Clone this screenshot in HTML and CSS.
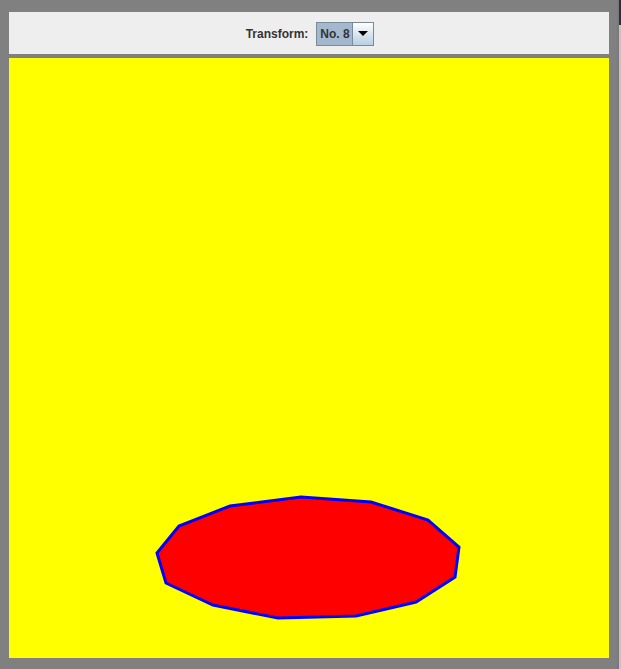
FILE: index.html
```html
<!DOCTYPE html>
<html>
<head>
<meta charset="utf-8">
<link rel="stylesheet" href="styles.css">
</head>
<body>
<div class="screen">
  <div class="window">
    <div class="toolbar">
      <span class="label">Transform:</span>
      <div class="combo">
        <span class="combo-value">No. 8</span>
        <span class="combo-button"><span class="arrow"></span></span>
      </div>
    </div>
    <div class="divider"></div>
    <div class="canvas">
      <svg class="shape" width="600" height="600" viewBox="0 0 600 600">
        <polygon points="148,495 170,468 221,448 292,439 362,444 419,462 450,489 446,519 407,544 347,558 269,560 204,547 157,525" fill="#ff0000" stroke="#0000ff" stroke-width="3" stroke-linejoin="miter"/>
      </svg>
    </div>
  </div>
  <div class="edge"><div class="edge-top"></div></div>
</div>
<div class="bottom"><div class="bottom-bar"></div></div>
</body>
</html>
```
FILE: styles.css
```css
html, body {
  margin: 0;
  padding: 0;
}
body {
  width: 621px;
  height: 669px;
  overflow: hidden;
  background: #808080;
  font-family: "Liberation Sans", Arial, sans-serif;
}
.screen {
  display: flex;
}
.window {
  width: 617px;
  height: 668px;
  box-sizing: border-box;
  padding: 12px 8px 10px 9px;
  background: #808080;
  display: flex;
  flex-direction: column;
}
.toolbar {
  height: 42px;
  background: #eeeeee;
  display: flex;
  align-items: center;
  justify-content: center;
  gap: 8px;
  padding-top: 1px;
  padding-left: 2px;
  box-sizing: border-box;
}
.label {
  font-weight: bold;
  font-size: 12px;
  color: #333333;
}
.combo {
  display: flex;
  height: 24px;
  width: 58px;
  box-sizing: border-box;
  border: 1px solid #7a8a99;
  background: #eeeeee;
}
.combo-value {
  flex: 1;
  display: flex;
  align-items: center;
  padding-left: 3px;
  background: #a3b8cc;
  font-weight: bold;
  font-size: 12px;
  color: #333333;
}
.combo-button {
  width: 20px;
  border-left: 1px solid #7a8a99;
  background: linear-gradient(#ffffff, #d7e3ee 55%, #b8cfe5);
  display: flex;
  align-items: center;
  justify-content: center;
}
.arrow {
  width: 0;
  height: 0;
  border-left: 5px solid transparent;
  border-right: 5px solid transparent;
  border-top: 5px solid #000000;
}
.divider {
  height: 4px;
  background: #808080;
}
.canvas {
  height: 600px;
  background: #ffff00;
}
.shape {
  display: block;
}
.edge {
  width: 4px;
  height: 669px;
  display: flex;
  background: linear-gradient(to right, #7a7a7a 0 2px, #c4c4c4 2px 4px);
}
.edge-top {
  width: 2px;
  height: 25px;
  margin-left: 2px;
  background: #1f2f57;
}
.bottom {
  height: 1px;
  background: #808080;
}
.bottom-bar {
  width: 367px;
  height: 1px;
  background: #3a3a3a;
}
```
